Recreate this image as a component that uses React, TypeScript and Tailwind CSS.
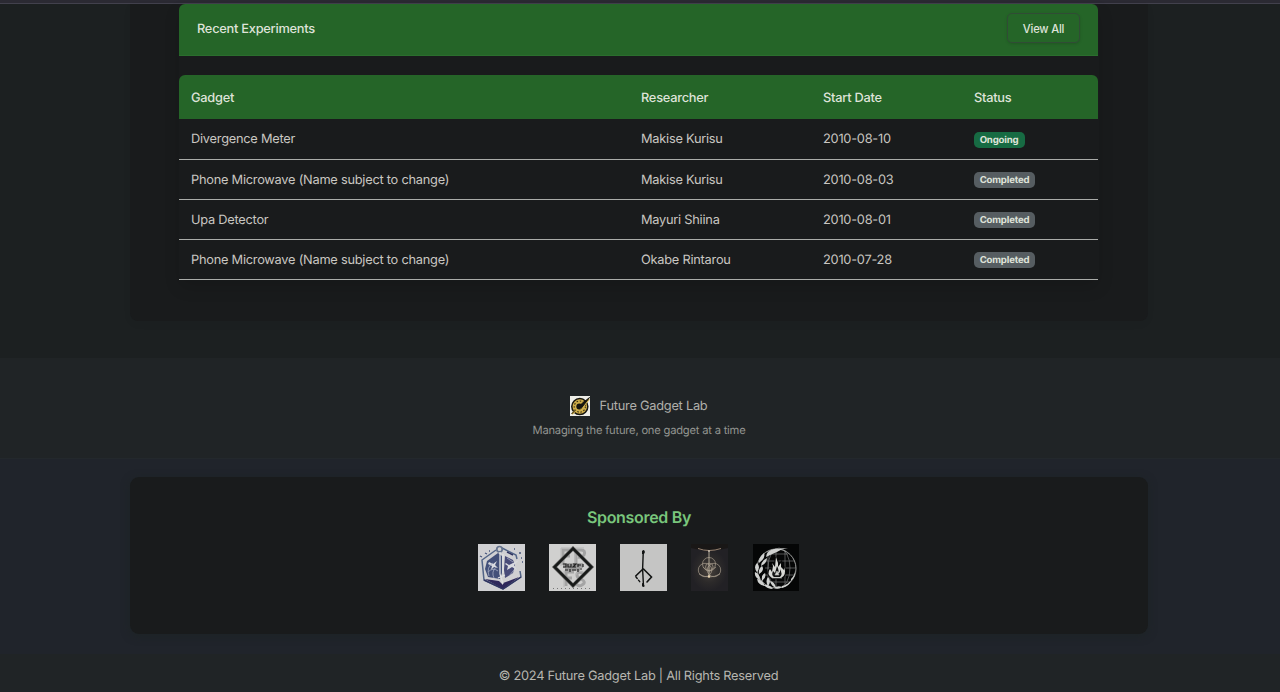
import React from "react";

const rows = [
  { gadget: "Divergence Meter", researcher: "Makise Kurisu", date: "2010-08-10", status: "Ongoing" },
  { gadget: "Phone Microwave (Name subject to change)", researcher: "Makise Kurisu", date: "2010-08-03", status: "Completed" },
  { gadget: "Upa Detector", researcher: "Mayuri Shiina", date: "2010-08-01", status: "Completed" },
  { gadget: "Phone Microwave (Name subject to change)", researcher: "Okabe Rintarou", date: "2010-07-28", status: "Completed" },
];

function GadgetLogo() {
  return (
    <svg className="h-5 w-5" viewBox="0 0 20 20">
      <rect width="20" height="20" fill="#eeeee8" />
      <circle cx="9.8" cy="10.6" r="8" fill="#cfae49" stroke="#15140f" strokeWidth="1.5" />
      <circle cx="9.8" cy="10.6" r="5.6" fill="none" stroke="#3a3016" strokeWidth="1.1" strokeDasharray="1.6 1.6" />
      <circle cx="9.3" cy="10.5" r="3" fill="#15140f" />
      <path d="m11 13 8-10M2 18l4-4" stroke="#cfae49" strokeWidth="2" />
      <path d="M9 10 19.5 1.5 11 12.5Z" fill="#15140f" stroke="#15140f" strokeWidth="1" />
      <path d="m1.5 18 4-4" stroke="#15140f" strokeWidth="1" />
    </svg>
  );
}

function CrystalLogo() {
  return (
    <svg className="h-[47px] w-[47px]" viewBox="0 0 47 47">
      <rect width="47" height="47" fill="#d0d0d2" />
      <path d="m24 4 14 7 1 4M42 27l1 6-18 12L6 36 4 16 18 6" fill="none" stroke="#536587" strokeWidth="1.5" />
      <path d="m20 9-11 8-2 8 3 8 12 2 2-6V12Z" fill="#435079" />
      <path d="m27 12 8 4 2 5-2 8-8 5-1-8Z" fill="#484b78" />
      <path d="m7 35 14 2 4 4v4ZM25 39l16-6-16 12Z" fill="#2f285b" />
      <circle cx="21.5" cy="5.2" r="2.7" fill="#d0d0d2" stroke="#65738d" strokeWidth="1.7" />
      <path d="M22 8v22l3 10M25 10v19M20 34l7-3" fill="none" stroke="#dfe0e3" strokeWidth="1.3" />
      <path d="m11 18 4 2 4-3-2 4 3 3-4-1-3 3 1-4-4-2ZM28 19l3 2 10-5-5 5 3 5-5-3-5 3 1-4-3-2Z" fill="#d8dae0" />
      <path d="M11 32q-3-9 4-13M16 34q-3-6 2-11M31 32l5-6M29 14l6 4M10 28q5-5 10-1" fill="none" stroke="#a4abc1" strokeWidth=".8" />
      <path d="m2 12 2 1M7 9l2 1M11 7h1M36 5h1M41 9h2M43 14h1M44 18h1" stroke="#46557c" strokeWidth="1.3" />
      <path d="m6 36 19 9 18-12M35 11l-6-3" fill="none" stroke="#303460" strokeWidth="1.5" />
    </svg>
  );
}

function DiamondLogo() {
  return (
    <svg className="h-[47px] w-[47px]" viewBox="0 0 47 47">
      <rect width="47" height="47" fill="#d0d0cf" />
      <g fill="none" stroke="#a4a4a4" strokeWidth="3">
        <path d="M14 21V6h8M14 12h7M27 20V6h5q5 0 3 5-2 3-6 2M17 42V28h8M17 34h6M36 30q-8-4-8 1 0 3 4 4 6 3 1 6-3 2-6-1" />
      </g>
      <g fill="none" stroke="#b7b7b7" strokeWidth="1">
        <path d="M12 22V4h11M26 20V4h9M15 43V27M36 29q-9-4-9 2" />
      </g>
      <path d="M24 4.5 42.5 23 24 41.5 5.5 23Z" fill="none" stroke="#777" strokeWidth="3.8" />
      <path d="M24 4.5 42.5 23 24 41.5 5.5 23Z" fill="none" stroke="#171918" strokeWidth="2.5" />
      <path d="M14 21.5h20M16 24.5h15" stroke="#999" strokeWidth="4.5" />
      <path d="M14 20h3v3h-3m5-3v3h3v-3m2 0h3l-3 3h3m2-3v3m0-2h3m2-1v3M16 26h3m2-1v3m2-2h4m2-1v3m2-3h2" fill="none" stroke="#202121" strokeWidth="1.2" />
      <path d="M4 44.5h40" stroke="#757575" strokeWidth="1" strokeDasharray="1 3" />
    </svg>
  );
}

function HunterLogo() {
  return (
    <svg className="h-[47px] w-[47px]" viewBox="0 0 47 47">
      <rect width="47" height="47" fill="#c5c5c4" />
      <g fill="none" stroke="#111312" strokeLinecap="round">
        <path d="m23.3 7-.7 18 .9 17" strokeWidth="1.4" />
        <path d="m23 25-7.3 7M23.5 25l8 8-4.5 5" strokeWidth="1.6" />
        <path d="m16 33 4 5" strokeWidth="1.4" strokeDasharray="2 2" />
      </g>
      <path d="m22 7 2-1 1 2-1 2h-2ZM22 39l1.5.5v1.5l1.5 1-2 1-1-1Z" fill="#111312" />
    </svg>
  );
}

function RingLogo() {
  return (
    <svg className="h-[47px] w-[37px]" viewBox="0 0 37 47">
      <defs>
        <radialGradient id="dark-glow">
          <stop stopColor="#4a433d" />
          <stop offset=".6" stopColor="#2c2a2a" />
          <stop offset="1" stopColor="#222125" />
        </radialGradient>
      </defs>
      <rect width="37" height="47" fill="#222125" />
      <ellipse cx="18" cy="26" rx="18" ry="21" fill="url(#dark-glow)" />
      <path d="M0 0h37v4q-18 5-37 0Z" fill="#191716" />
      <g fill="none" stroke="#a09687" strokeWidth=".75">
        <path d="M7 4.5q11 4 23 0" stroke="#94806f" strokeWidth="1" />
        <circle cx="18" cy="20" r="6.5" />
        <circle cx="14" cy="26" r="6.7" />
        <circle cx="23" cy="26" r="6.7" />
        <circle cx="18.3" cy="23" r="3.8" />
        <path d="M8 30q10 6 21 0M12 23q6 8 13 0" />
      </g>
      <path d="M18 6v27" stroke="#bfb5a3" strokeWidth=".9" />
      <circle cx="18" cy="32.5" r="1.2" fill="#e6d2ae" />
      <circle cx="18" cy="7" r=".9" fill="#c8beb0" />
    </svg>
  );
}

function FlameLogo() {
  return (
    <svg className="h-[47px] w-[46px]" viewBox="0 0 46 47">
      <rect width="46" height="47" fill="#050606" />
      <g fill="none" stroke="#747675" strokeWidth=".7">
        <path d="M13 17h28M12 24h31M13 31h28M16 38h22M15 10h20M15 7v34M23 4v39M32 6v35" />
        <ellipse cx="26" cy="24" rx="11" ry="20" />
      </g>
      <circle cx="23.5" cy="24.5" r="19.5" fill="none" stroke="#b0b1af" strokeWidth=".9" />
      <g fill="#d0d2d0">
        <path d="M13 13q1-7 8-8l14-1q-7 1-11 4-5 2-11 5Z" />
        <path d="M6 19q-1-5 5-10 2 5-5 10ZM8 22q0-5 6-8 0 5-6 8ZM4 28q-4-5 0-9 4 4 0 9ZM6 30q-1-5 3-8 3 4-3 8ZM7 36q-6-3-5-8 5 2 5 8ZM9 37q-1-6 3-8 2 4-3 8ZM12 42q-7-1-8-7 6 1 8 7ZM15 42q-3-5 0-9 4 4 0 9ZM20 45q-6 0-9-4 5-1 9 4ZM23 44q-5-2-6-7 5 1 6 7ZM29 43q-4 3-8 1 4-3 8-1ZM29 42q6-1 9-6-1 6-9 8ZM38 35q4-4 4-8 1 5-4 10Z" />
      </g>
      <path d="m23 13 2 6v4l3-4v4l3 3v-3q3 8-3 11H19q-6-4-2-9l2 3 1-6-1-3 3 4Z" fill="#d8d9d5" stroke="#090a0a" strokeWidth="2.5" paintOrder="stroke" />
      <path d="M24 22q3 5 0 8 4-1 3-5 3 5 0 8h-6q-3-2-1-6l2 2Z" fill="#121313" />
      <path d="m24 27 2 4h-4ZM19 34h10" fill="#d8d9d5" stroke="#b5b7b4" strokeWidth=".6" />
    </svg>
  );
}

export default function App() {
  return (
    <div className="h-[692px] w-[1280px] overflow-hidden bg-[#20242b] font-['Inter',sans-serif] text-[12.8px] text-[#c9c7c2] [text-rendering:geometricPrecision] [&_*]:tracking-[-0.019em]">
      <div className="h-1 border-b border-[#42414d] bg-[#2b2a33]" />
      <main className="h-[354px] bg-[#1c2021] pr-[2px] pl-0">
        <section className="mx-auto h-[317px] w-[1018px] rounded-b-[8px] bg-[#191b1c] px-[49px] shadow-[0_3px_8px_rgba(0,0,0,0.04)]">
          <div className="rounded-b-[6px] shadow-[0_8px_16px_rgba(0,0,0,0.12)]">
            <header className="flex h-[52px] w-[919px] items-center justify-between rounded-t-[6px] border-b border-[#2b6e2e] bg-[#256528] pr-[18px] pl-[18px] pb-[3px]">
              <h2 className="pt-[3px] leading-5 font-medium text-[#dfe3d9]">Recent Experiments</h2>
              <button className="h-[30px] w-[73px] rounded-[5px] border border-[#304c35] pt-[2px] text-[11.2px] font-medium text-[#dfe3d9] shadow-[0_1px_3px_rgba(0,0,0,0.15)]">View All</button>
            </header>
            <table className="mt-[19px] w-[919px] table-fixed border-separate border-spacing-0 text-left">
              <colgroup>
                <col className="w-[450px]" />
                <col className="w-[182px]" />
                <col className="w-[151px]" />
                <col className="w-[136px]" />
              </colgroup>
              <thead>
                <tr className="h-11 text-[#dfe3d9]">
                  <th className="rounded-tl-[6px] bg-[#256528] px-3 pt-[3px] font-medium">Gadget</th>
                  <th className="bg-[#256528] px-3 pt-[3px] font-medium">Researcher</th>
                  <th className="bg-[#256528] px-3 pt-[3px] font-medium">Start Date</th>
                  <th className="rounded-tr-[6px] bg-[#256528] px-3 pt-[3px] font-medium">Status</th>
                </tr>
              </thead>
              <tbody>
                {rows.map((row) => (
                  <tr className="h-10 first:h-[41px]" key={row.date}>
                    <td className="border-b border-[#aaaca9] px-3 pt-[2px]">{row.gadget}</td>
                    <td className="border-b border-[#aaaca9] px-3 pt-[2px]">{row.researcher}</td>
                    <td className="border-b border-[#aaaca9] px-3 pt-[2px]">{row.date}</td>
                    <td className="border-b border-[#aaaca9] px-3">
                      <span className={row.status === "Ongoing" ? "mt-[2px] flex h-4 w-[51px] items-center justify-center rounded-[5px] bg-[#176b43] pt-[2px] pr-px text-[9.6px] font-bold text-[#dfe3d9]" : "mt-px flex h-4 w-[61px] items-center justify-center rounded-[5px] bg-[#565d61] pt-[2px] text-[9.6px] font-bold text-[#dfe3d9]"}>{row.status}</span>
                    </td>
                  </tr>
                ))}
              </tbody>
            </table>
          </div>
        </section>
      </main>
      <section className="flex h-[101px] flex-col items-center border-b border-[#23282c] bg-[#202426] pt-[38px] pr-[2px]">
        <div className="flex h-5 items-center gap-[10px] pr-px">
          <GadgetLogo />
          <span className="pt-px text-[#b0afaa]">Future Gadget Lab</span>
        </div>
        <p className="mt-[6px] text-[11.2px] leading-4 text-[#929490]">Managing the future, one gadget at a time</p>
      </section>
      <section className="h-[195px] pt-[18px] pr-[2px]">
        <div className="mx-auto flex h-[157px] w-[1018px] flex-col items-center rounded-[9px] bg-[#191b1c] pt-[30px] shadow-[0_2px_8px_rgba(26,35,31,0.5)]">
          <h2 className="text-[16px] leading-5 font-semibold tracking-[-0.022em] text-[#79c77c]">Sponsored By</h2>
          <div className="mt-[17px] flex items-center gap-6 pr-[1px]">
            <CrystalLogo />
            <DiamondLogo />
            <HunterLogo />
            <div className="mr-px">
              <RingLogo />
            </div>
            <FlameLogo />
          </div>
        </div>
      </section>
      <footer className="h-[38px] bg-[#202426] pt-[13px] pr-[3px] text-center leading-5 text-[#b7b6b0]">
        <span>© 2024 Future Gadget Lab | All Rights Reserved</span>
      </footer>
    </div>
  );
}
